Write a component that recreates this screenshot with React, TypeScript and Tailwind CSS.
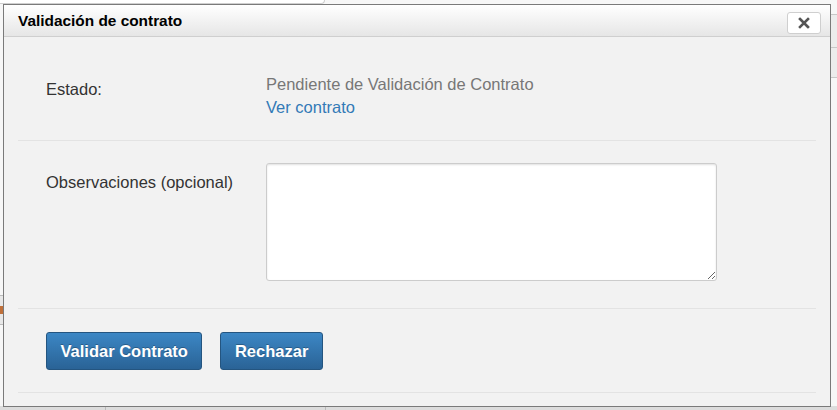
import React from 'react';

export default function App() {
  return (
    <div className="relative w-[837px] h-[410px] overflow-hidden bg-[#f7f7f7] font-['Liberation_Sans',Arial,sans-serif]">
      {/* page behind the dialog */}
      <div className="absolute left-0 top-0 w-[325px] h-[4px] bg-white border-r border-b border-[#cfcfcf] rounded-br" />
      <div className="absolute right-0 top-[14px] w-[6px] h-[34px] border-t border-b border-[#c8c8c8] bg-[#ececec]" />
      <div className="absolute right-0 top-[48px] w-[6px] h-[30px] border-b border-[#c8c8c8] bg-[#ececec]" />
      <div className="absolute left-0 top-[295px] w-[3px] h-[30px] border-t border-b border-[#bbb] bg-[#e8e8e8]" />
      <div className="absolute left-0 top-[306px] w-[3px] h-[8px] bg-[#c0703a]" />
      <div className="absolute left-0 bottom-0 w-full h-[4px] bg-[#dcdcdc]" />
      <div className="absolute left-[105px] bottom-0 w-px h-[4px] bg-[#bbb]" />
      <div className="absolute left-[325px] bottom-0 w-px h-[4px] bg-[#bbb]" />

      {/* Dialog */}
      <div className="relative ml-[3px] mt-[4px] w-[828px] h-[403px] border border-[#7a7a7a] bg-[#f2f2f2] flex flex-col">
        {/* Header */}
        <div className="h-[32px] flex items-center justify-between pl-[14px] pr-[9px] border-b border-[#cfcfcf] bg-gradient-to-b from-white to-[#e6e6e6]">
          <h2 className="text-[15.4px] font-bold text-black">Validación de contrato</h2>
          <button className="mt-[4px] w-[34px] h-[22px] flex items-center justify-center bg-white border border-[#cfcfcf] rounded-[3px]">
            <svg width="12" height="12" viewBox="0 0 12 12">
              <path d="M2 2 L10 10 M10 2 L2 10" stroke="#555" strokeWidth="2.6" strokeLinecap="square" />
            </svg>
          </button>
        </div>

        {/* Body */}
        <div className="px-[14px]">
          <div className="flex pt-[36px] pb-[21px] border-b border-[#e3e3e3]">
            <div className="w-[248px] pl-[28px] pt-[4px] text-[16.5px] text-[#333]">Estado:</div>
            <div className="flex flex-col text-[16.5px] leading-[23px]">
              <span className="text-[#777]">Pendiente de Validación de Contrato</span>
              <a href="#" className="text-[#337ab7]">Ver contrato</a>
            </div>
          </div>

          <div className="flex pt-[22px] pb-[27px] border-b border-[#e3e3e3]">
            <div className="w-[248px] pl-[28px] pt-[7px] text-[16.5px] text-[#333]">Observaciones (opcional)</div>
            <textarea className="block w-[451px] h-[118px] bg-white border border-[#ccc] rounded-[3px] shadow-[inset_0_1px_2px_rgba(0,0,0,0.12)] resize-y" />
          </div>

          <div className="flex gap-[18px] pl-[28px] pt-[23px] pb-[22px] border-b border-[#e3e3e3]">
            <button className="h-[38px] px-[13.5px] rounded-[3px] border border-[#245580] bg-gradient-to-b from-[#3c87c5] to-[#2a6396] text-white text-[16.5px] font-bold [text-shadow:0_-1px_0_rgba(0,0,0,0.25)]">
              Validar Contrato
            </button>
            <button className="h-[38px] px-[13.5px] rounded-[3px] border border-[#245580] bg-gradient-to-b from-[#3c87c5] to-[#2a6396] text-white text-[16.5px] font-bold [text-shadow:0_-1px_0_rgba(0,0,0,0.25)]">
              Rechazar
            </button>
          </div>
        </div>
      </div>
    </div>
  );
}
